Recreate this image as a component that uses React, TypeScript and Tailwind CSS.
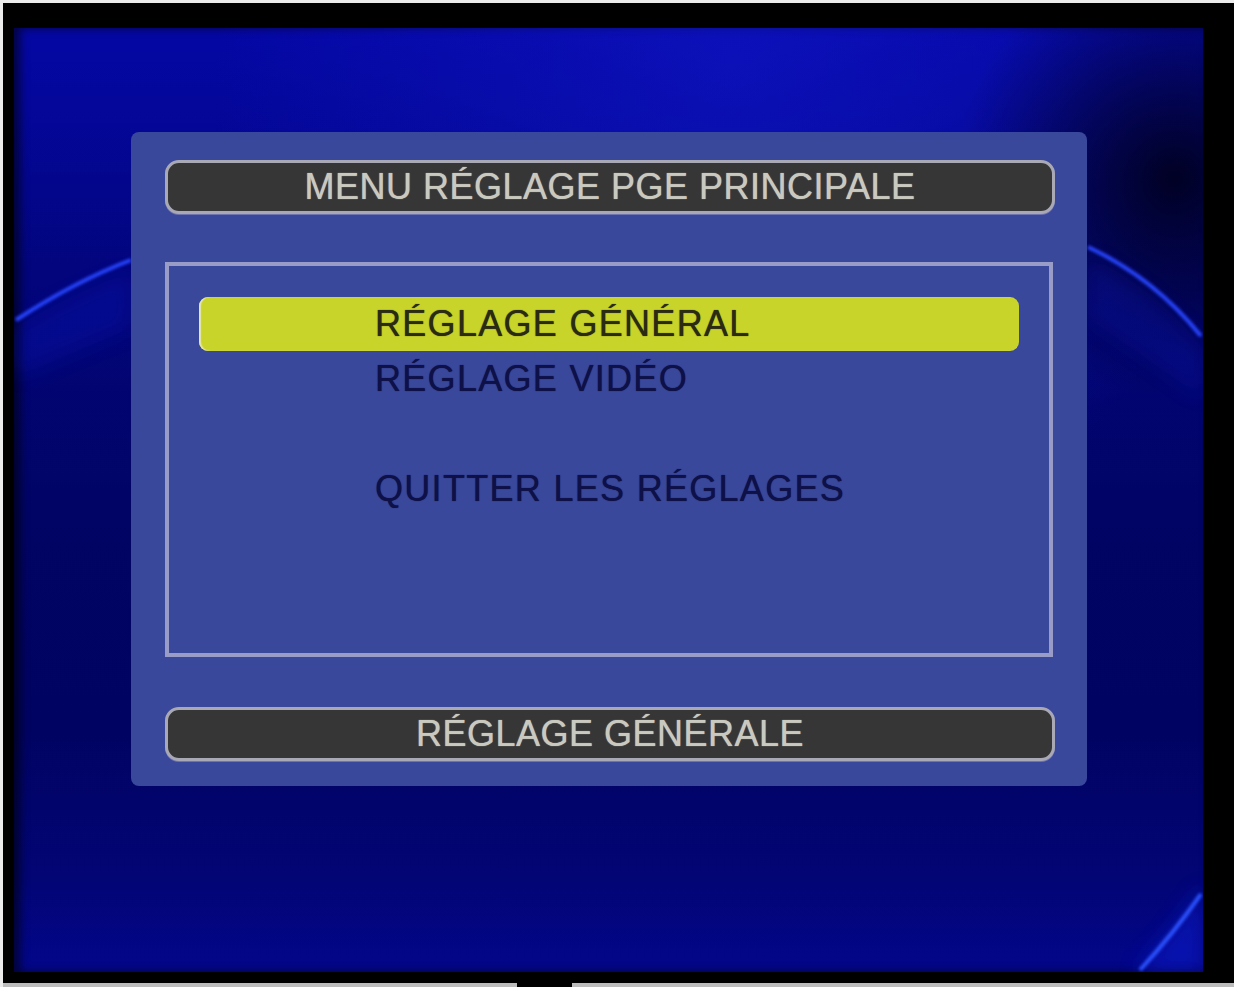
import React from "react";

const items = [
  { label: "RÉGLAGE GÉNÉRAL", active: true },
  { label: "RÉGLAGE VIDÉO" },
  { label: "" },
  { label: "QUITTER LES RÉGLAGES" },
];

const font = "font-['Liberation_Sans',Arial,Helvetica,sans-serif]";

// light streaks drawn over the blue screen background
function Streaks() {
  return (
    <svg
      className="pointer-events-none absolute inset-0"
      width="1189"
      height="944"
      viewBox="0 0 1189 944"
    >
      <defs>
        <filter id="soft" x="-20%" y="-20%" width="140%" height="140%">
          <feGaussianBlur stdDeviation="1.8" />
        </filter>
        <filter id="glow" x="-30%" y="-30%" width="160%" height="160%">
          <feGaussianBlur stdDeviation="10" />
        </filter>
        <radialGradient id="darkTR" cx="1160" cy="150" r="220" gradientUnits="userSpaceOnUse">
          <stop offset="0" stopColor="#000018" stopOpacity="0.9" />
          <stop offset="1" stopColor="#000018" stopOpacity="0" />
        </radialGradient>
        <radialGradient id="brightTop" cx="720" cy="30" r="520" gradientUnits="userSpaceOnUse">
          <stop offset="0" stopColor="#1016c8" stopOpacity="0.6" />
          <stop offset="1" stopColor="#1016c8" stopOpacity="0" />
        </radialGradient>
      </defs>
      <rect x="0" y="0" width="1189" height="944" fill="url(#brightTop)" />
      <rect x="0" y="0" width="1189" height="944" fill="url(#darkTR)" />

      {/* faint glow under the streaks */}
      <path d="M0 300 Q60 264 117 244 L117 300 L0 350 Z" fill="#0a1cd8" opacity="0.22" filter="url(#glow)" />
      <path d="M1074 228 Q1140 260 1189 320 L1189 370 L1074 290 Z" fill="#0a1cd8" opacity="0.22" filter="url(#glow)" />
      <path d="M1120 944 Q1160 902 1189 856 L1189 944 Z" fill="#0a22e0" opacity="0.45" filter="url(#glow)" />

      {/* streak lines */}
      <path d="M2 292 Q60 254 117 232" stroke="#2644ff" strokeWidth="4" fill="none" filter="url(#soft)" />
      <path d="M1074 219 Q1140 250 1187 308" stroke="#2644ff" strokeWidth="4" fill="none" filter="url(#soft)" />
      <path d="M1126 942 Q1160 905 1187 866" stroke="#2a52ff" strokeWidth="4" fill="none" filter="url(#soft)" />
      <path d="M1187 866 L1187 810" stroke="#1a34f0" strokeWidth="3" fill="none" opacity="0.5" filter="url(#glow)" />
    </svg>
  );
}

function Bar({ children }: { children: React.ReactNode }) {
  return (
    <div className="ml-[34px] flex h-[54px] w-[890px] items-center justify-center rounded-[14px] border-[3px] border-[#a9a9b6] bg-[#363636] shadow-[0_1px_0_#6f74b0]">
      <span className={`${font} text-[36px] leading-none tracking-[0.5px] text-[#c9c9c0] [text-shadow:0_0_1px_#c9c9c0]`}>
        {children}
      </span>
    </div>
  );
}

export default function App() {
  return (
    <div className="flex h-[987px] w-[1234px] flex-col overflow-hidden border-l-[3px] border-t-[3px] border-[#ececec] bg-black">
      <div className="pl-[11px] pt-[25px]">
        <div className="relative h-[944px] w-[1189px] overflow-hidden bg-[linear-gradient(180deg,#0507a4_0%,#04079a_8%,#02057c_26%,#010464_52%,#010362_74%,#020574_90%,#03068a_100%)] shadow-[inset_6px_0_10px_rgba(0,0,0,0.6)]">
          <Streaks />

          <div className="relative ml-[117px] mt-[104px] flex h-[654px] w-[956px] flex-col rounded-[8px] bg-[#3a489c] pt-[28px]">
            <Bar>MENU RÉGLAGE PGE PRINCIPALE</Bar>

            <div className="ml-[34px] mt-[48px] h-[395px] w-[888px] border-[4px] border-[#9a9cc8] px-[30px] pt-[31px]">
              <ul className="flex flex-col gap-px">
                {items.map((item, i) => (
                  <li
                    key={i}
                    className={
                      item.active
                        ? "flex h-[54px] items-center rounded-[9px] bg-[#c9d42a] pl-[176px] shadow-[inset_2px_0_1px_#e2e6b0]"
                        : "flex h-[54px] items-center pl-[176px]"
                    }
                  >
                    <span
                      className={`${font} text-[36px] leading-none tracking-[1.3px] ${
                        item.active
                          ? "text-[#2a2b12] [text-shadow:0_0_1px_#2a2b12]"
                          : "text-[#0e1048] [text-shadow:0_0_1px_#0e1048]"
                      }`}
                    >
                      {item.label}
                    </span>
                  </li>
                ))}
              </ul>
            </div>

            <div className="mt-[50px]">
              <Bar>RÉGLAGE GÉNÉRALE</Bar>
            </div>
          </div>
        </div>
      </div>

      <div className="h-[11px]" />
      <div className="flex h-[4px]">
        <div className="w-[514px] bg-[#bcbcbc]" />
        <div className="w-[55px] bg-black" />
        <div className="flex-1 bg-[#bcbcbc]" />
      </div>
    </div>
  );
}
